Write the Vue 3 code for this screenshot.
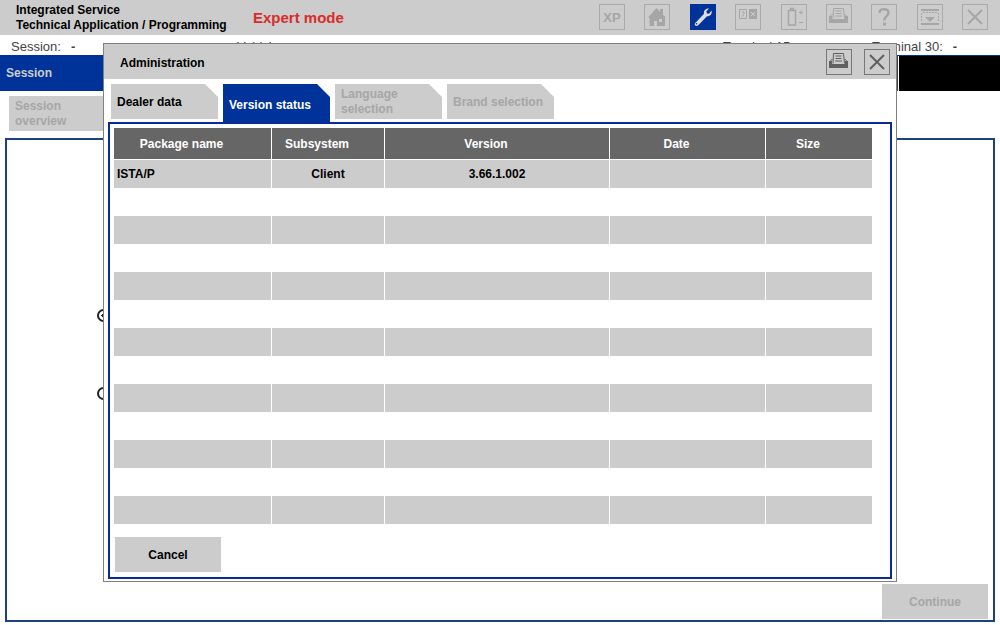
<script setup>
const tools = ['xp', 'home', 'wrench', 'device', 'battery', 'printer', 'help', 'window', 'close']
const toolNames = {
  xp: 'XP', home: 'Home', wrench: 'Administration', device: 'Devices', battery: 'Battery',
  printer: 'Print', help: 'Help', window: 'Minimize', close: 'Close'
}
const tabs = [
  { label: 'Dealer data' },
  { label: 'Version status', active: true },
  { label: 'Language selection', off: true },
  { label: 'Brand selection', off: true }
]
const columns = ['Package name', 'Subsystem', 'Version', 'Date', 'Size']
const rows = [['ISTA/P', 'Client', '3.66.1.002', '', '']]
while (rows.length < 13) rows.push(['', '', '', '', ''])
</script>

<template>
  <div class="app">
    <header class="topbar">
      <h1 class="title">Integrated Service<br>Technical Application / Programming</h1>
      <strong class="mode">Expert mode</strong>
      <nav class="tools">
        <button v-for="t in tools" :key="t" class="icon" :class="{ on: t === 'wrench' }" :aria-label="toolNames[t]">
          <span v-if="t === 'xp'" class="xp">XP</span>
          <svg v-else viewBox="0 0 24 24" width="24" height="24" fill="none" stroke="currentColor">
            <g v-if="t === 'home'" fill="currentColor" stroke="none">
              <path fill-rule="evenodd" d="M3 12.500 11.500 3 15 6.800V4h3v6l3 2.500h-1V21h-8v-5H9v5H4.500v-8.500zM14 14h3v3h-3z" />
            </g>
            <g v-else-if="t === 'wrench'" stroke="none" fill="currentColor">
              <path fill-rule="evenodd" d="M20.500 5.500c.9 3.500-1.300 6-4.500 5.800L8 19.500c-1 1.600-3.300 1.800-4 .7-.8-1 .1-2.800 1.500-3.500L13 8.800c-.6-3 1.500-5.600 5-5.300l-2.600 2.700.5 2.200 2.100.4zM5.500 18a.8.8 0 1 0 .1 1.600.8.8 0 0 0-.1-1.600z" />
            </g>
            <g v-else-if="t === 'device'">
              <path d="M3.500 4.500h7v9h-7zM6 7h2v1.500L7 10v1.500" />
              <path d="M13 4h8v10h-8z" fill="currentColor" stroke="none" />
              <path d="m15 7 4 4m0-4-4 4" stroke="#ccc" />
            </g>
            <g v-else-if="t === 'battery'">
              <path d="M6.500 5.500h7v14.500h-7zM8.500 5V3.500h3V5" stroke-width="1.500" />
              <path d="M17 7.500h4m-2-2v4M17 17.500h4" />
            </g>
            <g v-else-if="t === 'printer'">
              <path d="M2 11h3v3h13v-3h3v7H2z" fill="currentColor" stroke="none" />
              <path d="M6 13.500 6.500 3.500h10l1 10M8.500 6h6M8.500 8.500h6M8 11h7M3.500 11l1-1.500h1M19.500 11l-1-1.500h-1" />
            </g>
            <g v-else-if="t === 'help'">
              <path d="M7.500 8c0-2.500 1.800-3.700 4.500-3.700s4.500 1.200 4.500 3.500c0 3.300-4.200 3.400-4.200 7.700" stroke-width="2.500" />
              <path d="M11 17.500h3v3h-3z" fill="currentColor" stroke="none" />
            </g>
            <g v-else-if="t === 'window'">
              <path d="M3 5h18M3 19h18" stroke-width="2" />
              <path d="M3.500 8v9M20.500 8v9M5 7.500h14" stroke-dasharray="2 1" />
              <path d="M7 12h10l-5 5z" fill="currentColor" stroke="none" />
            </g>
            <path v-else d="m5 5 14 14M19 5 5 19" stroke-width="2" />
          </svg>
        </button>
      </nav>
    </header>

    <div class="info">
      <span>Session:<b>-</b></span>
      <span>Vehicle:</span>
      <span>Terminal 15:</span>
      <span>Terminal 30:<b>-</b></span>
    </div>

    <div class="band"><span>Session</span><div class="black"></div></div>
    <button class="btn overview" disabled>Session overview</button>

    <main class="frame">
      <div class="choices">
        <input type="radio" name="choice" aria-label="First option" checked>
        <input type="radio" name="choice" aria-label="Second option">
      </div>
      <button class="btn" disabled>Continue</button>
    </main>

    <section class="dialog" role="dialog" aria-labelledby="dialog-title">
      <header class="dialog-head">
        <h2 id="dialog-title">Administration</h2>
        <button class="icon dark" aria-label="Print">
          <svg viewBox="0 0 24 24" width="24" height="24" fill="none" stroke="currentColor">
            <path d="M2 11h3v3h13v-3h3v7H2z" fill="currentColor" stroke="none" />
            <path d="M6 13.500 6.500 3.500h10l1 10M8.500 6h6M8.500 8.500h6M8 11h7M3.500 11l1-1.500h1M19.500 11l-1-1.500h-1" />
          </svg>
        </button>
        <button class="icon dark" aria-label="Close">
          <svg viewBox="0 0 24 24" width="24" height="24" fill="none" stroke="currentColor">
            <path d="m5 5 14 14M19 5 5 19" stroke-width="2" />
          </svg>
        </button>
      </header>
      <div class="tabs" role="tablist">
        <button v-for="t in tabs" :key="t.label" class="tab" :class="{ active: t.active }" :disabled="t.off" role="tab" :aria-selected="!!t.active">{{ t.label }}</button>
      </div>
      <div class="panel">
        <table>
          <colgroup><col class="c1"><col class="c2"><col class="c3"><col class="c4"><col class="c5"></colgroup>
          <thead>
            <tr><th v-for="c in columns" :key="c" scope="col">{{ c }}</th></tr>
          </thead>
          <tbody>
            <tr v-for="(r, i) in rows" :key="i"><td v-for="(v, j) in r" :key="j">{{ v }}</td></tr>
          </tbody>
        </table>
        <button class="btn cancel">Cancel</button>
      </div>
    </section>
  </div>
</template>

<style>
body { background: #fff; }
</style>

<style scoped>
* { box-sizing: border-box; }
.app {
  position: relative;
  display: flex;
  flex-direction: column;
  min-height: 100vh;
  padding-bottom: 3px;
  font: bold 12px/15px "Liberation Sans", Arial, sans-serif;
  color: #000;
}
button { font: inherit; color: inherit; border: 0; padding: 0; margin: 0; }
h1, h2 { font: inherit; margin: 0; }
.topbar { display: flex; align-items: center; height: 35px; background: #ccc; padding: 0 12px 0 16px; }
.title { width: 237px; white-space: nowrap; padding-top: 1px; }
.mode { font-size: 15px; color: #d92b2b; }
.tools { display: flex; justify-content: space-between; width: 389px; margin-left: auto; padding-bottom: 1px; }
.icon {
  display: flex; align-items: center; justify-content: center;
  width: 26px; height: 26px; flex: none;
  border: 1px solid #aaa; background: transparent; color: #a6a6a6;
}
.icon.on { background: #039; border-color: #039; color: #ddd; }
.icon.dark { border-color: #777; color: #606060; }
.xp { font-size: 13px; }
.info {
  display: grid; grid-template-columns: 226px 486px 149px 1fr;
  padding: 4px 0 1px 11px; font-size: 13px; font-weight: normal; color: #444;
}
.info b { margin-left: 10px; }
.band { display: flex; align-items: center; height: 36px; background: #039; color: #ccc; padding-left: 6px; }
.black { width: 101px; height: 35px; margin-left: auto; background: #000; box-shadow: -1px 0 #fff, -4px 0 #444; }
.btn { width: 106px; height: 35px; background: #ccc; padding-top: 1px; }
.btn:disabled { color: #a6a6a6; }
.overview { margin: 5px 0 0 9px; padding: 1px 40px 0 6px; text-align: left; }
.frame {
  flex: 1; display: flex; justify-content: space-between; align-items: flex-end;
  margin: 7px 5px 0; border: 2px solid #1d427e; padding: 0 5px 1px 0;
}
.choices { display: flex; flex-direction: column; align-self: flex-start; gap: 65px; padding: 169px 0 0 90px; }
.choices input {
  appearance: none; width: 13px; height: 13px; margin: 0;
  border: 2px solid #222; border-radius: 50%;
}
.choices input:checked { background: radial-gradient(#222 0 2px, #fff 2px); }
.dialog { position: absolute; top: 43px; left: 103px; right: 103px; background: #fff; border: 1px solid #808080; padding-bottom: 2px; }
.dialog-head { display: flex; align-items: center; gap: 12px; height: 35px; background: #ccc; padding: 0 6px 0 16px; }
.dialog-head h2 { flex: 1; padding-top: 4px; }
.tabs { display: flex; gap: 5px; padding: 5px 7px 3px; }
.tab {
  width: 107px; height: 35px; padding: 1px 20px 0 6px; text-align: left; background: #ccc;
  clip-path: polygon(0 0, calc(100% - 13px) 0, 100% 13px, 100% 100%, 0 100%);
}
.tab:nth-child(1), .tab:nth-child(2) { white-space: nowrap; }
.tab:nth-child(4) { white-space: nowrap; padding-right: 0; }
.tab:nth-child(1) { padding-top: 2px; }
.tab:disabled { color: #a6a6a6; }
.tab.active { height: 38px; margin-bottom: -3px; background: #039; color: #fff; padding-top: 4px; }
.panel { margin: 0 4px; border: 2px solid #0a2a9c; padding: 4px 19px 5px 4px; }
table { width: 100%; table-layout: fixed; border-collapse: separate; border-spacing: 0; }
.c1 { width: 157px; }
.c2 { width: 113px; }
.c3 { width: 225px; }
.c4 { width: 156px; }
.c5 { width: 107px; }
th { height: 32px; padding: 2px 22px 0 0; background: #666; color: #fff; border-bottom: 1px solid #fff; }
td { height: 28px; padding: 1px 0 0; text-align: center; }
td:first-child { text-align: left; padding-left: 3px; }
th + th, td + td { border-left: 1px solid #fff; }
tbody tr:nth-child(odd) td { background: #ccc; }
.cancel { display: block; margin: 13px 0 0 1px; }
</style>
